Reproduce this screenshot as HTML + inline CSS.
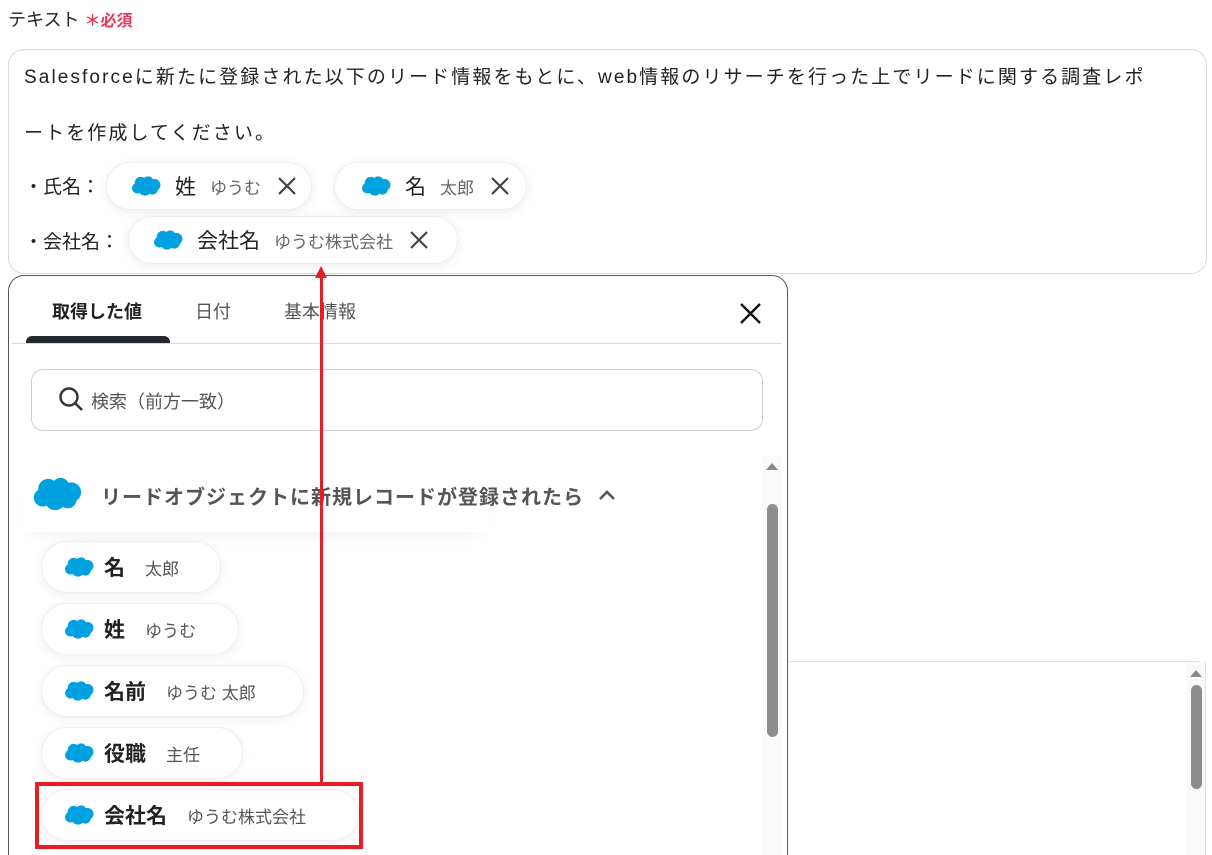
<!DOCTYPE html>
<html><head><meta charset="utf-8"><style>
*{box-sizing:border-box;margin:0;padding:0}
html,body{width:1212px;height:855px;overflow:hidden}
body{background:#fff;font-family:"Liberation Sans","Noto Sans CJK JP",sans-serif;color:#222;position:relative}
.abs{position:absolute}
.chip{position:absolute;height:48px;border-radius:24px;background:#fff;box-shadow:0 2px 10px rgba(0,0,0,.08);border:1px solid #eee;display:flex;align-items:center;font-size:21px;white-space:nowrap}
.chip .v{font-size:17px;color:#666;margin-left:14px}
.chip .x{margin-left:16px;display:block}
.it{position:absolute;left:41px;height:52px;border-radius:26px;background:#fff;border:1px solid #eee;box-shadow:0 2px 10px rgba(0,0,0,.07);display:flex;align-items:center;padding-left:22px;font-size:21px;font-weight:bold;white-space:nowrap}
.it .v{font-size:17px;color:#555;font-weight:normal;margin-left:20px}
svg.c{display:block}
</style></head><body>
<svg width="0" height="0" style="position:absolute"><defs><g id="cl" fill="#00a1e0"><circle cx="9" cy="7" r="5.5"/><circle cx="16" cy="6" r="5"/><circle cx="22" cy="9" r="5.5"/><circle cx="6" cy="12" r="5"/><circle cx="13" cy="13" r="6"/><circle cx="20" cy="13" r="5"/></g></defs></svg>

<div class="abs" style="left:8px;top:6px;font-size:18px">テキスト <span style="color:#e8385b;font-size:16px;font-weight:bold">＊必須</span></div>

<div class="abs" style="left:8px;top:49px;width:1199px;height:225px;border:1px solid #d8d8dc;border-radius:16px"></div>
<div class="abs" style="left:24px;top:62px;font-size:19px;letter-spacing:2.1px">Salesforceに新たに登録された以下のリード情報をもとに、web情報のリサーチを行った上でリードに関する調査レポ</div>
<div class="abs" style="left:24px;top:118px;font-size:19px;letter-spacing:2.1px">ートを作成してください。</div>
<div class="abs" style="left:24px;top:172px;font-size:19px">・氏名：</div>
<div class="abs" style="left:24px;top:227px;font-size:19px">・会社名：</div>

<div class="chip" style="left:106px;top:162px;width:206px;padding-left:24px"><svg class="c" width="30" height="22" viewBox="0 0 28 20"><use href="#cl"/></svg><span style="margin-left:14px">姓</span><span class="v">ゆうむ</span><svg class="x" width="20" height="20"><path d="M2 2L18 18M18 2L2 18" stroke="#444" stroke-width="2.2"/></svg></div>
<div class="chip" style="left:334px;top:162px;width:193px;padding-left:26px"><svg class="c" width="30" height="22" viewBox="0 0 28 20"><use href="#cl"/></svg><span style="margin-left:14px">名</span><span class="v">太郎</span><svg class="x" width="20" height="20"><path d="M2 2L18 18M18 2L2 18" stroke="#444" stroke-width="2.2"/></svg></div>
<div class="chip" style="left:128px;top:216px;width:330px;padding-left:24px"><svg class="c" width="30" height="22" viewBox="0 0 28 20"><use href="#cl"/></svg><span style="margin-left:14px">会社名</span><span class="v">ゆうむ株式会社</span><svg class="x" width="20" height="20"><path d="M2 2L18 18M18 2L2 18" stroke="#444" stroke-width="2.2"/></svg></div>

<!-- popup -->
<div class="abs" style="left:8px;top:275px;width:780px;height:600px;border:1px solid #555a62;border-radius:16px;background:#fff"></div>
<div class="abs" style="left:52px;top:298px;font-size:18px;font-weight:bold;color:#222">取得した値</div>
<div class="abs" style="left:195px;top:298px;font-size:18px;color:#555">日付</div>
<div class="abs" style="left:284px;top:298px;font-size:18px;color:#555">基本情報</div>
<div class="abs" style="left:26px;top:336px;width:144px;height:8px;background:#23272e;border-radius:6px 6px 0 0"></div>
<div class="abs" style="left:12px;top:343px;width:770px;height:1px;background:#d8d8dc"></div>
<svg class="abs" style="left:739px;top:302px" width="23" height="23"><path d="M2 2L21 21M21 2L2 21" stroke="#111" stroke-width="2.4"/></svg>

<div class="abs" style="left:31px;top:369px;width:732px;height:62px;border:1px solid #ccced4;border-radius:12px"></div>
<svg class="abs" style="left:58px;top:386px" width="28" height="28"><circle cx="11" cy="11" r="8.5" fill="none" stroke="#333" stroke-width="2.4"/><path d="M17 17L24 24" stroke="#333" stroke-width="2.6"/></svg>
<div class="abs" style="left:91px;top:388px;font-size:18px;color:#555">検索（前方一致）</div>

<div class="abs" style="left:763px;top:456px;width:19px;height:400px;background:#fafafa"></div>
<div class="abs" style="left:766px;top:463px;width:0;height:0;border-left:6px solid transparent;border-right:6px solid transparent;border-bottom:7px solid #8a8a8a"></div>
<div class="abs" style="left:767px;top:504px;width:11px;height:233px;background:#8d8d8d;border-radius:6px"></div>

<div class="abs" style="left:20px;top:462px;width:470px;height:70px;box-shadow:0 12px 20px -14px rgba(0,0,0,.1)"></div>
<svg class="abs" style="left:32px;top:476px" width="50" height="36" viewBox="0 0 28 20"><use href="#cl"/></svg>
<div class="abs" style="left:101px;top:481px;font-size:20px;font-weight:bold;color:#555;letter-spacing:1px">リードオブジェクトに新規レコードが登録されたら</div>
<svg class="abs" style="left:597px;top:488px" width="20" height="14"><path d="M3 11L10 4L17 11" fill="none" stroke="#555" stroke-width="2.6"/></svg>

<div class="it" style="top:541px;width:180px"><svg class="c" width="30" height="22" viewBox="0 0 28 20"><use href="#cl"/></svg><span style="margin-left:10px">名</span><span class="v">太郎</span></div>
<div class="it" style="top:603px;width:198px"><svg class="c" width="30" height="22" viewBox="0 0 28 20"><use href="#cl"/></svg><span style="margin-left:10px">姓</span><span class="v">ゆうむ</span></div>
<div class="it" style="top:665px;width:263px"><svg class="c" width="30" height="22" viewBox="0 0 28 20"><use href="#cl"/></svg><span style="margin-left:10px">名前</span><span class="v">ゆうむ 太郎</span></div>
<div class="it" style="top:727px;width:202px"><svg class="c" width="30" height="22" viewBox="0 0 28 20"><use href="#cl"/></svg><span style="margin-left:10px">役職</span><span class="v">主任</span></div>
<div class="it" style="top:789px;width:318px"><svg class="c" width="30" height="22" viewBox="0 0 28 20"><use href="#cl"/></svg><span style="margin-left:10px">会社名</span><span class="v">ゆうむ株式会社</span></div>

<!-- right panel -->
<div class="abs" style="left:788px;top:661px;width:412px;height:1px;background:#e2e2e2"></div>
<div class="abs" style="left:1187px;top:662px;width:19px;height:200px;background:#fafafa;border-right:1px solid #e4e4e4"></div>
<div class="abs" style="left:1190px;top:670px;width:0;height:0;border-left:6px solid transparent;border-right:6px solid transparent;border-bottom:7px solid #8a8a8a"></div>
<div class="abs" style="left:1191px;top:685px;width:11px;height:104px;background:#8d8d8d;border-radius:6px"></div>

<!-- red annotation -->
<div class="abs" style="left:320px;top:276px;width:3px;height:508px;background:#e51d25"></div>
<div class="abs" style="left:315px;top:266px;width:0;height:0;border-left:6px solid transparent;border-right:6px solid transparent;border-bottom:12px solid #e51d25"></div>
<div class="abs" style="left:35px;top:782px;width:328px;height:67px;border:4px solid #e51d25"></div>
</body></html>
